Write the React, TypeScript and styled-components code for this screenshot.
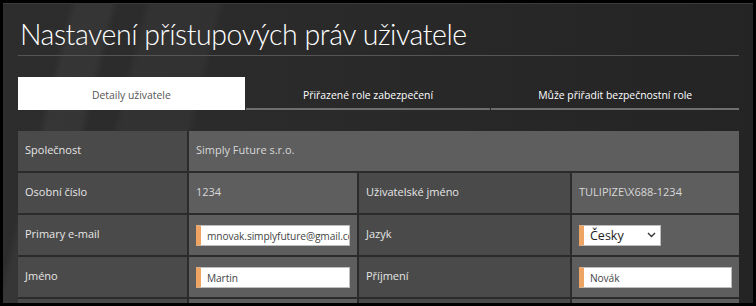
import React from "react";
import styled, { createGlobalStyle } from "styled-components";

const GlobalStyle = createGlobalStyle`
  html, body {
    margin: 0;
    padding: 0;
    background: #000;
  }
  body {
    font-family: "Open Sans", "Noto Sans", sans-serif;
  }
`;

function App() {
  return (
    <>
      <GlobalStyle />
      <Frame>
        <Panel>
          <Title>Nastavení přístupových práv uživatele</Title>
          <Tabs>
            <Tab $active $width={227}>Detaily uživatele</Tab>
            <Tab $width={245}>Přiřazené role zabezpečení</Tab>
            <Tab $width={248}>Může přiřadit bezpečnostní role</Tab>
          </Tabs>
          <Table>
            <LabelCell>Společnost</LabelCell>
            <ValueCell $span={3}>Simply Future s.r.o.</ValueCell>

            <LabelCell>Osobní číslo</LabelCell>
            <ValueCell>1234</ValueCell>
            <LabelCell>Uživatelské jméno</LabelCell>
            <ValueCell>TULIPIZE\X688-1234</ValueCell>

            <LabelCell>Primary e-mail</LabelCell>
            <ValueCell>
              <Field readOnly value="mnovak.simplyfuture@gmail.com" />
            </ValueCell>
            <LabelCell>Jazyk</LabelCell>
            <ValueCell>
              <SelectBox>
                <span>Česky</span>
                <svg width="9" height="6" viewBox="0 0 9 6">
                  <path d="M1 1l3.5 3.5L8 1" fill="none" stroke="#333" strokeWidth="1.4" />
                </svg>
              </SelectBox>
            </ValueCell>

            <LabelCell>Jméno</LabelCell>
            <ValueCell>
              <Field readOnly value="Martin" />
            </ValueCell>
            <LabelCell>Příjmení</LabelCell>
            <ValueCell>
              <Field readOnly value="Novák" />
            </ValueCell>

            <LabelCell />
            <ValueCell />
            <LabelCell />
            <ValueCell />
          </Table>
        </Panel>
      </Frame>
    </>
  );
}

const Frame = styled.div`
  width: 756px;
  height: 306px;
  box-sizing: border-box;
  border: 3px solid #000;
  overflow: hidden;
`;

const Panel = styled.div`
  height: 100%;
  box-sizing: border-box;
  padding: 11px 0 0 15px;
  border-top: 1px solid #3a3a3a;
  background:
    linear-gradient(
      104deg,
      transparent 0%,
      transparent 8%,
      rgba(255, 255, 255, 0.045) 9%,
      rgba(255, 255, 255, 0.045) 13%,
      transparent 14%,
      transparent 17%,
      rgba(255, 255, 255, 0.03) 18%,
      rgba(255, 255, 255, 0.03) 26%,
      transparent 27%
    ),
    linear-gradient(90deg, #2d2d2d 0%, #2a2a2a 40%, #242424 100%);
`;

const Title = styled.h1`
  margin: 0;
  width: 721px;
  font-family: Lato, "Open Sans", sans-serif;
  font-size: 28.5px;
  line-height: 36px;
  font-weight: 300;
  letter-spacing: -0.45px;
  color: #fff;
  padding: 1px 0 3px 2px;
  box-sizing: border-box;
  border-bottom: 1px solid #555;
`;

const Tabs = styled.div`
  display: flex;
  gap: 1px;
  margin-top: 21px;
  width: 721px;
`;

const Tab = styled.div<{ $active?: boolean; $width: number }>`
  width: ${(p) => p.$width}px;
  height: 33px;
  box-sizing: border-box;
  display: flex;
  align-items: center;
  justify-content: center;
  padding-top: 4px;
  font-size: 10.4px;
  color: ${(p) => (p.$active ? "#555" : "#fff")};
  background: ${(p) => (p.$active ? "#fff" : "transparent")};
  border-bottom: 2px solid ${(p) => (p.$active ? "#fff" : "#6e6e6e")};
`;

const Table = styled.div`
  display: grid;
  grid-template-columns: 169px 168px 211px 167px;
  grid-auto-rows: 40px;
  gap: 2px;
  margin-top: 21px;
  width: 721px;
  background: #2b2b2b;
`;

const Cell = styled.div<{ $span?: number }>`
  display: flex;
  align-items: center;
  padding: 0 7px 3px;
  font-size: 11px;
  ${(p) => (p.$span ? `grid-column: span ${p.$span};` : "")}
`;

const LabelCell = styled(Cell)`
  background: #4a4a4a;
  color: #e6e6e6;
`;

const ValueCell = styled(Cell)`
  background: #5e5e5e;
  color: #d8d8d8;
`;

const Field = styled.input`
  width: 156px;
  height: 21px;
  box-sizing: border-box;
  margin-top: 3px;
  border: 1px solid #bdbdbd;
  border-left: 5px solid #eea463;
  background: #fff;
  color: #444;
  font-family: "Open Sans", "Noto Sans", sans-serif;
  font-size: 10.2px;
  letter-spacing: -0.1px;
  padding: 1px 0 0 6px;
  outline: none;
`;

const SelectBox = styled.div`
  width: 82px;
  height: 21px;
  box-sizing: border-box;
  margin-top: 3px;
  display: flex;
  align-items: center;
  justify-content: space-between;
  padding: 0 4px 0 6px;
  border: 1px solid #bdbdbd;
  border-left: 5px solid #eea463;
  background: #fff;
  color: #222;
  font-size: 12.5px;
`;

export default App;
